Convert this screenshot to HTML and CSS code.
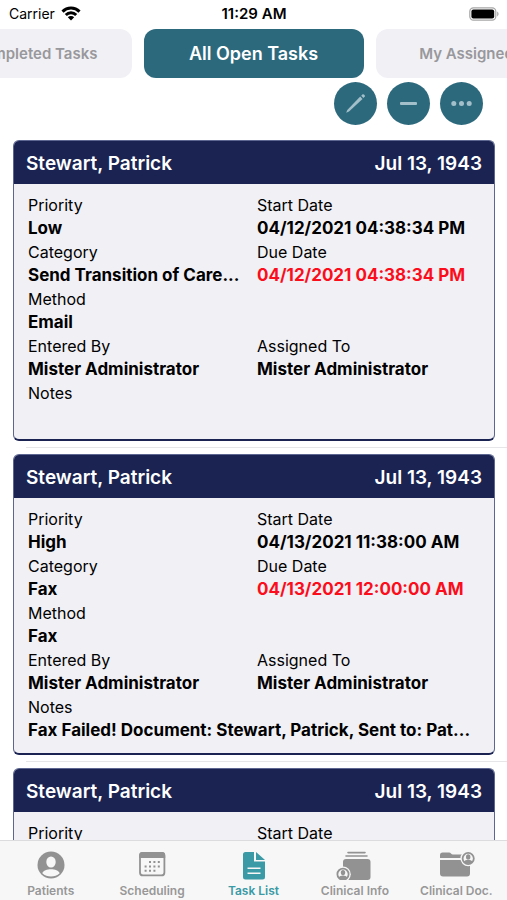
FILE: index.html
```html
<!DOCTYPE html>
<html lang="en">
<head>
  <meta charset="UTF-8">
  <meta name="viewport" content="width=device-width, initial-scale=1.0">
  <title>Task List</title>
  <link rel="stylesheet" href="styles.css">
</head>
<body>
  <header class="status-bar">
    <div class="carrier">
      Carrier
      <svg width="20" height="15" viewBox="0 0 20 15" fill="none" stroke="#000" stroke-width="3">
        <path d="M1.5 5.6a12 12 0 0 1 17 0"/>
        <path d="M4.8 9a7.4 7.4 0 0 1 10.4 0"/>
        <path d="M10 14.5 6.8 11.2a4.6 4.6 0 0 1 6.4 0z" fill="#000" stroke="none"/>
      </svg>
    </div>
    <div class="clock">11:29 AM</div>
    <div class="battery">
      <svg width="30" height="14" viewBox="0 0 30 14">
        <rect x="0.8" y="0.8" width="26" height="12.4" rx="3.6" fill="#fff" stroke="#a6a6a6" stroke-width="1.2"/>
        <rect x="2.4" y="2.4" width="22.8" height="9.2" rx="2" fill="#000"/>
        <path d="M28.2 4.6c1.8.7 1.8 4.1 0 4.8z" fill="#a6a6a6"/>
      </svg>
    </div>
  </header>

  <div class="filters">
    <button class="filter">My Completed Tasks</button>
    <button class="filter active">All Open Tasks</button>
    <button class="filter">My Assigned Task</button>
  </div>

  <div class="actions">
    <button class="action" aria-label="Edit">
      <svg width="43" height="43" viewBox="0 0 43 43" fill="#a3c0ca">
        <path d="M26.2 14.6l2.3 2.3L15 29.6l-2.800 1.100 1.100-2.800z"/>
        <path d="M27.2 13.7l1.5-1.4c.8-.7 2.8 1.2 2.1 2.1l-1.4 1.5z"/>
      </svg>
    </button>
    <button class="action" aria-label="Remove">
      <svg width="43" height="43" viewBox="0 0 43 43" fill="#a3c0ca">
        <rect x="13" y="20" width="17" height="3" rx="1"/>
      </svg>
    </button>
    <button class="action" aria-label="More">
      <svg width="43" height="43" viewBox="0 0 43 43" fill="#a3c0ca">
        <circle cx="13.8" cy="21.5" r="2.5"/>
        <circle cx="21.5" cy="21.5" r="2.5"/>
        <circle cx="29.2" cy="21.5" r="2.5"/>
      </svg>
    </button>
  </div>

  <main class="task-list">
    <div class="task">
      <article class="card">
        <h2 class="card-header"><span>Stewart, Patrick</span><span>Jul 13, 1943</span></h2>
        <dl class="fields">
          <div class="field"><dt>Priority</dt><dd>Low</dd></div>
          <div class="field"><dt>Start Date</dt><dd>04/12/2021 04:38:34 PM</dd></div>
          <div class="field"><dt>Category</dt><dd>Send Transition of Care...</dd></div>
          <div class="field"><dt>Due Date</dt><dd class="overdue">04/12/2021 04:38:34 PM</dd></div>
          <div class="field wide"><dt>Method</dt><dd>Email</dd></div>
          <div class="field"><dt>Entered By</dt><dd>Mister Administrator</dd></div>
          <div class="field"><dt>Assigned To</dt><dd>Mister Administrator</dd></div>
          <div class="field wide"><dt>Notes</dt><dd></dd></div>
        </dl>
      </article>
    </div>

    <div class="task">
      <article class="card">
        <h2 class="card-header"><span>Stewart, Patrick</span><span>Jul 13, 1943</span></h2>
        <dl class="fields">
          <div class="field"><dt>Priority</dt><dd>High</dd></div>
          <div class="field"><dt>Start Date</dt><dd>04/13/2021 11:38:00 AM</dd></div>
          <div class="field"><dt>Category</dt><dd>Fax</dd></div>
          <div class="field"><dt>Due Date</dt><dd class="overdue">04/13/2021 12:00:00 AM</dd></div>
          <div class="field wide"><dt>Method</dt><dd>Fax</dd></div>
          <div class="field"><dt>Entered By</dt><dd>Mister Administrator</dd></div>
          <div class="field"><dt>Assigned To</dt><dd>Mister Administrator</dd></div>
          <div class="field wide"><dt>Notes</dt><dd>Fax Failed! Document: Stewart, Patrick, Sent to: Pat...</dd></div>
        </dl>
      </article>
    </div>

    <div class="task">
      <article class="card">
        <h2 class="card-header"><span>Stewart, Patrick</span><span>Jul 13, 1943</span></h2>
        <dl class="fields">
          <div class="field"><dt>Priority</dt><dd></dd></div>
          <div class="field"><dt>Start Date</dt><dd></dd></div>
        </dl>
      </article>
    </div>
  </main>

  <nav class="tab-bar">
    <a class="tab" href="#patients">
      <svg width="40" height="30" viewBox="0 0 40 30">
        <circle cx="20" cy="15" r="13.5" fill="#929292"/>
        <ellipse cx="20" cy="12" rx="4.7" ry="5.6" fill="#f7f7f7"/>
        <path d="M11.3 23.2c1.8-5.2 15.6-5.2 17.4 0-4.6 4.3-12.8 4.3-17.4 0z" fill="#f7f7f7"/>
      </svg>
      Patients
    </a>
    <a class="tab" href="#scheduling">
      <svg width="40" height="30" viewBox="0 0 40 30">
        <rect x="8" y="3" width="24.4" height="22.4" rx="3" fill="none" stroke="#929292" stroke-width="1.8"/>
        <path d="M7.2 8V5a3 3 0 0 1 3-3h20a3 3 0 0 1 3 3v3z" fill="#929292"/>
        <g stroke="#929292" stroke-width="2" stroke-dasharray="2 2.4">
          <path d="M17 12h12"/>
          <path d="M12.6 16.4h16.4"/>
          <path d="M12.6 20.8h11"/>
        </g>
      </svg>
      Scheduling
    </a>
    <a class="tab selected" href="#tasks">
      <svg width="40" height="30" viewBox="0 0 40 30">
        <path d="M11.5 2H20v9.5h11V27a2.5 2.5 0 0 1-2.5 2.5h-17A2.5 2.5 0 0 1 9 27V4.5A2.5 2.5 0 0 1 11.5 2z" fill="#3a9aa5"/>
        <path d="M22 2l9 8h-9z" fill="#3a9aa5"/>
        <path d="M13.5 18.2h13M13.5 23.2h13" stroke="#f7f7f7" stroke-width="1.6"/>
      </svg>
      Task List
    </a>
    <a class="tab" href="#info">
      <svg width="40" height="30" viewBox="0 0 40 30">
        <path d="M13 2.6h17M11 6h21" stroke="#929292" stroke-width="1.6" stroke-linecap="round"/>
        <rect x="8" y="9" width="27.5" height="21" rx="3" fill="#929292"/>
        <circle cx="8" cy="24.200" r="7.800" fill="#f7f7f7"/>
        <circle cx="8" cy="24.200" r="5.600" fill="none" stroke="#929292" stroke-width="1.800"/>
        <ellipse cx="8" cy="22.600" rx="2.200" ry="2.700" fill="#929292"/>
        <path d="M3.600 27.800c1.400-3 7.400-3 8.800 0-2.400 2.200-6.400 2.200-8.800 0z" fill="#929292"/>
      </svg>
      Clinical Info
    </a>
    <a class="tab" href="#documents">
      <svg width="40" height="30" viewBox="0 0 40 30">
        <path d="M4 8V5a2.5 2.5 0 0 1 2.5-2.5h6.500c2 0 2 2 4 2h14.500a2.500 2.500 0 0 1 2.500 2.500v1z" fill="#929292"/>
        <path d="M4 10h30v13.5a3 3 0 0 1-3 3H7a3 3 0 0 1-3-3z" fill="#929292"/>
        <circle cx="32.2" cy="8.5" r="7.8" fill="#f7f7f7"/>
        <circle cx="32.2" cy="8.5" r="5.6" fill="none" stroke="#929292" stroke-width="1.8"/>
        <ellipse cx="32.2" cy="6.9" rx="2.2" ry="2.7" fill="#929292"/>
        <path d="M27.800 12.100c1.400-3 7.400-3 8.800 0-2.400 2.200-6.400 2.200-8.800 0z" fill="#929292"/>
      </svg>
      Clinical Doc.
    </a>
  </nav>
</body>
</html>
```
FILE: styles.css
```css
* {
  box-sizing: border-box;
}
body {
  display: flex;
  flex-direction: column;
  height: 100vh;
  margin: 0;
  overflow: hidden;
  background: #fff;
  color: #000;
  font-family: Inter, "Liberation Sans", sans-serif;
  font-size: 15px;
}
button {
  border: none;
  padding: 0;
  font-family: inherit;
  cursor: pointer;
}
.status-bar {
  display: grid;
  grid-template-columns: 1fr auto 1fr;
  align-items: center;
  flex: none;
  height: 29px;
  padding: 0 8px 2px 9px;
  font-size: 14px;
}
.carrier {
  display: flex;
  align-items: center;
  gap: 6px;
}
.clock {
  font-size: 15px;
  font-weight: 600;
}
.battery {
  display: flex;
  justify-content: flex-end;
}
.filters {
  display: flex;
  justify-content: center;
  flex: none;
  gap: 12px;
  overflow: hidden;
}
.filter {
  flex: none;
  width: 220px;
  height: 49px;
  border-radius: 12px;
  background: #f1f0f5;
  color: #98989c;
  font-size: 15px;
  font-weight: 600;
}
.filter.active {
  background: #2d697d;
  color: #fff;
  font-size: 18px;
}
.actions {
  display: flex;
  justify-content: flex-end;
  flex: none;
  gap: 10px;
  padding: 4px 24px 15px;
}
.action {
  width: 43px;
  height: 43px;
  border-radius: 50%;
  background: #2d697d;
}
.action svg {
  display: block;
}
.task-list {
  flex: 1;
  min-height: 0;
  overflow: hidden;
}
.task {
  padding: 0 12px 0 13px;
}
/* hairline between cards, inset on the left only */
.task::after {
  content: "";
  display: block;
  height: 1px;
  margin: 6px -12px 6px 13px;
  background: #e6e6e8;
}
.card {
  border: 1px solid #5c6690;
  border-bottom: 2px solid #1a2352;
  border-radius: 6px;
  background: #f1f0f5;
  overflow: hidden;
}
.card-header {
  display: flex;
  justify-content: space-between;
  align-items: center;
  height: 43px;
  margin: 0;
  padding: 1px 12px 0;
  background: #1a2352;
  color: #fff;
  font-size: 19px;
  font-weight: 600;
}
.fields {
  display: grid;
  grid-template-columns: 1fr 1fr;
  column-gap: 6px;
  margin: 0;
  padding: 9px 14px 11px;
}
.field {
  min-width: 0;
  white-space: nowrap;
}
.field.wide {
  grid-column: 1 / -1;
}
.field dt {
  height: 24px;
  line-height: 24px;
  font-size: 16px;
}
.field dd {
  height: 23px;
  margin: 0;
  line-height: 23px;
  font-size: 17px;
  font-weight: 700;
}
.field .overdue {
  color: #fb0d1b;
}
.tab-bar {
  display: flex;
  flex: none;
  height: 60px;
  border-top: 1px solid #dcdcdf;
  background: #f7f7f7;
}
.tab {
  display: flex;
  flex: 1;
  flex-direction: column;
  align-items: center;
  gap: 4px;
  padding-top: 9px;
  color: #989898;
  font-size: 12px;
  font-weight: 600;
  line-height: 14px;
  text-decoration: none;
}
.tab.selected {
  color: #3a9aa5;
}
```
